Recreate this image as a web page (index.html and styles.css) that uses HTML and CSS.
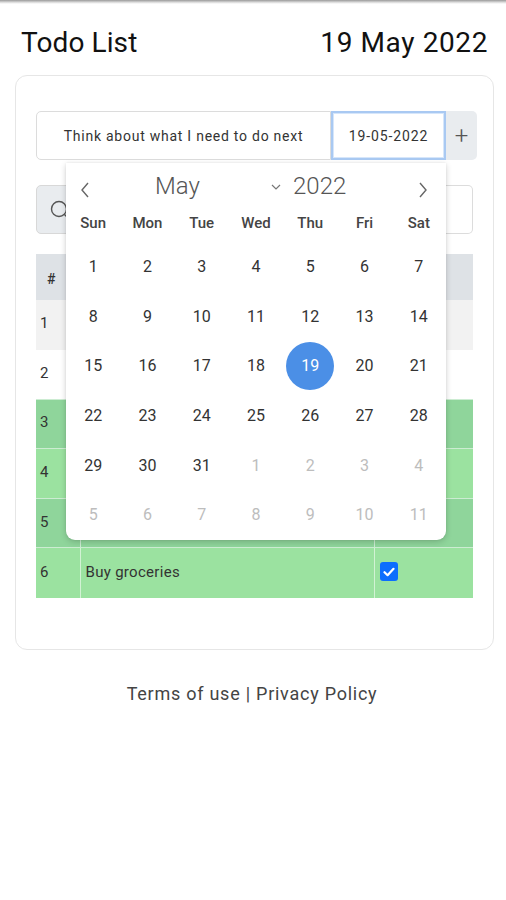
FILE: index.html
```html
<!DOCTYPE html>
<html lang="en">
<head>
    <meta charset="UTF-8">
    <meta name="viewport" content="width=device-width, initial-scale=1.0">
    <title>Todo List</title>
    <link rel="stylesheet" href="styles.css">
</head>
<body>
    <div class="topbar"></div>

    <div class="header">
        <h1>Todo List</h1>
        <div class="today">19 May 2022</div>
    </div>

    <div class="card">
        <div class="add-group">
            <div class="task-input">Think about what I need to do next</div>
            <div class="date-input">19-05-2022</div>
            <div class="add-btn">+</div>
        </div>

        <div class="search-group">
            <div class="search-icon">
                <svg width="22" height="22" viewBox="0 0 22 22"><circle cx="9" cy="9" r="7.5" fill="none" stroke="#555" stroke-width="1.4"/><line x1="14.5" y1="14.5" x2="20" y2="20" stroke="#555" stroke-width="1.4"/></svg>
            </div>
            <div class="search-input"></div>
        </div>

        <table class="todo-table">
            <thead>
                <tr><th class="col-num">#</th><th class="col-task"></th><th class="col-done"></th></tr>
            </thead>
            <tbody>
                <tr class="odd"><td>1</td><td></td><td></td></tr>
                <tr><td>2</td><td></td><td></td></tr>
                <tr class="done dark"><td>3</td><td></td><td></td></tr>
                <tr class="done"><td>4</td><td></td><td></td></tr>
                <tr class="done dark"><td>5</td><td></td><td></td></tr>
                <tr class="done"><td>6</td><td>Buy groceries</td><td><span class="check">
                    <svg width="12" height="10" viewBox="0 0 12 10"><polyline points="1.5,5.2 4.6,8.2 10.5,1.8" fill="none" stroke="#fff" stroke-width="2.2" stroke-linecap="round" stroke-linejoin="round"/></svg>
                </span></td></tr>
            </tbody>
        </table>

        <!-- date picker popup, open over the list -->
        <div class="datepicker">
            <div class="dp-head">
                <span class="dp-prev">
                    <svg width="10" height="16" viewBox="0 0 10 16"><polyline points="8,1 2,8 8,15" fill="none" stroke="#666" stroke-width="1.4"/></svg>
                </span>
                <span class="dp-month">May
                    <svg class="dp-caret" width="10" height="6" viewBox="0 0 10 6"><polyline points="1,1 5,5 9,1" fill="none" stroke="#777" stroke-width="1.2"/></svg>
                </span>
                <span class="dp-year">2022</span>
                <span class="dp-next">
                    <svg width="10" height="16" viewBox="0 0 10 16"><polyline points="2,1 8,8 2,15" fill="none" stroke="#666" stroke-width="1.4"/></svg>
                </span>
            </div>
            <div class="dp-grid dp-days">
                <span>Sun</span><span>Mon</span><span>Tue</span><span>Wed</span><span>Thu</span><span>Fri</span><span>Sat</span>
            </div>
            <div class="dp-grid dp-dates">
                <span>1</span><span>2</span><span>3</span><span>4</span><span>5</span><span>6</span><span>7</span>
                <span>8</span><span>9</span><span>10</span><span>11</span><span>12</span><span>13</span><span>14</span>
                <span>15</span><span>16</span><span>17</span><span>18</span><span class="selected"><b>19</b></span><span>20</span><span>21</span>
                <span>22</span><span>23</span><span>24</span><span>25</span><span>26</span><span>27</span><span>28</span>
                <span>29</span><span>30</span><span>31</span><span class="other">1</span><span class="other">2</span><span class="other">3</span><span class="other">4</span>
                <span class="other">5</span><span class="other">6</span><span class="other">7</span><span class="other">8</span><span class="other">9</span><span class="other">10</span><span class="other">11</span>
            </div>
        </div>
    </div>

    <div class="footer">Terms of use | Privacy Policy</div>
</body>
</html>
```

FILE: styles.css
```css
* {
    margin: 0;
    padding: 0;
    box-sizing: border-box;
}

body {
    font-family: Roboto, 'Noto Sans', sans-serif;
    background: #fff;
    color: #222;
}

.topbar {
    height: 4px;
    background: linear-gradient(to bottom, #9a9a9a, #e8e8e8 70%, #fff);
}

.header {
    display: flex;
    justify-content: space-between;
    align-items: baseline;
    padding: 22px 18px 0 21px;
    height: 71px;
}

.header h1 {
    font-size: 28px;
    font-weight: 400;
    color: #111;
    letter-spacing: 0.1px;
}

.today {
    font-size: 28px;
    color: #111;
    letter-spacing: 0.6px;
}

.card {
    position: relative;
    margin: 0 12px 0 15px;
    border: 1px solid #e6e6e6;
    border-radius: 12px;
    padding: 35px 20px 51px 20px;
}

/* add row */
.add-group {
    display: flex;
    height: 49px;
    margin-right: -4px;
    font-size: 14px;
    color: #333;
}

.task-input {
    width: 295px;
    border: 1px solid #dcdcdc;
    border-radius: 5px 0 0 5px;
    display: flex;
    align-items: center;
    justify-content: center;
    letter-spacing: 0.75px;
}

.date-input {
    width: 115px;
    border: 2px solid #a9c9f2;
    box-shadow: inset 0 0 0 1px #d6e6fa;
    display: flex;
    align-items: center;
    justify-content: center;
    letter-spacing: 0.9px;
}

.add-btn {
    flex: 1;
    background: #e9ecef;
    border-radius: 0 5px 5px 0;
    display: flex;
    align-items: center;
    justify-content: center;
    font-size: 24px;
    font-weight: 300;
    color: #555;
}

/* search row */
.search-group {
    display: flex;
    height: 49px;
    margin-top: 25px;
}

.search-icon {
    width: 44px;
    background: #e9ecef;
    border: 1px solid #d8d8d8;
    border-radius: 5px 0 0 5px;
    display: flex;
    align-items: center;
    padding-left: 13px;
    padding-top: 3px;
}

.search-input {
    flex: 1;
    border: 1px solid #dcdcdc;
    border-left: none;
    border-radius: 0 5px 5px 0;
}

/* table */
.todo-table {
    width: 100%;
    margin-top: 20px;
    border-collapse: collapse;
    font-size: 15px;
    color: #333;
}

.todo-table th {
    height: 46px;
    background: #dee2e6;
    text-align: left;
    padding-left: 11px;
    padding-top: 3px;
    font-size: 14px;
    font-weight: 500;
}

.todo-table td {
    height: 49.6px;
    padding-left: 4px;
    padding-bottom: 3px;
    border-left: 1px solid rgba(255, 255, 255, 0.55);
}

.todo-table td:first-child {
    border-left: none;
}

.col-num { width: 44px; }
.col-done { width: 99px; }

.todo-table tr.odd td {
    background: #f2f2f2;
}

.todo-table tr.done td {
    background: #9be2a0;
    border-top: 1px solid rgba(255, 255, 255, 0.55);
}

.todo-table tr.done.dark td {
    background: #8fd59b;
}

.todo-table tr.done td:nth-child(2) {
    padding-left: 5px;
    letter-spacing: 0.3px;
}

.todo-table td:nth-child(3) {
    padding-left: 5px;
}

.check {
    display: inline-flex;
    align-items: center;
    justify-content: center;
    width: 18px;
    height: 19px;
    background: #0d6efd;
    border-radius: 3px;
    vertical-align: middle;
}

/* datepicker */
.datepicker {
    position: absolute;
    top: 87px;
    left: 50px;
    width: 380px;
    height: 377px;
    background: #fff;
    border-radius: 0 0 9px 9px;
    box-shadow: 0 2px 6px rgba(0, 0, 0, 0.18), 0 0 2px rgba(0, 0, 0, 0.08);
}

.dp-head {
    display: flex;
    align-items: center;
    height: 42px;
    padding: 4px 16px 0 14px;
    color: #555;
}

.dp-prev,
.dp-next {
    display: flex;
    width: 12px;
    margin-top: 8px;
}

.dp-month {
    display: flex;
    align-items: center;
    width: 128px;
    margin-left: 63px;
    font-size: 24px;
    font-weight: 300;
}

.dp-caret {
    margin-left: auto;
    margin-right: 2px;
    margin-top: 2px;
}

.dp-year {
    margin-left: 10px;
    font-size: 24px;
    font-weight: 300;
    flex: 1;
}

.dp-grid {
    display: grid;
    grid-template-columns: repeat(7, 1fr);
    text-align: center;
}

.dp-days {
    height: 37px;
    align-items: center;
    font-size: 15px;
    font-weight: 500;
    color: #444;
    padding-bottom: 2px;
}

.dp-dates {
    grid-auto-rows: 49.6px;
    align-items: center;
    justify-items: center;
    font-size: 16px;
    color: #333;
}

.dp-dates .other {
    color: #bdbdbd;
}

.dp-dates .selected b {
    display: flex;
    align-items: center;
    justify-content: center;
    width: 48px;
    height: 48px;
    border-radius: 50%;
    background: #4b8fe6;
    color: #fff;
    font-weight: 400;
}

.footer {
    text-align: center;
    margin-top: 33px;
    font-size: 18px;
    color: #444;
    letter-spacing: 0.75px;
    padding-right: 2px;
}
```
